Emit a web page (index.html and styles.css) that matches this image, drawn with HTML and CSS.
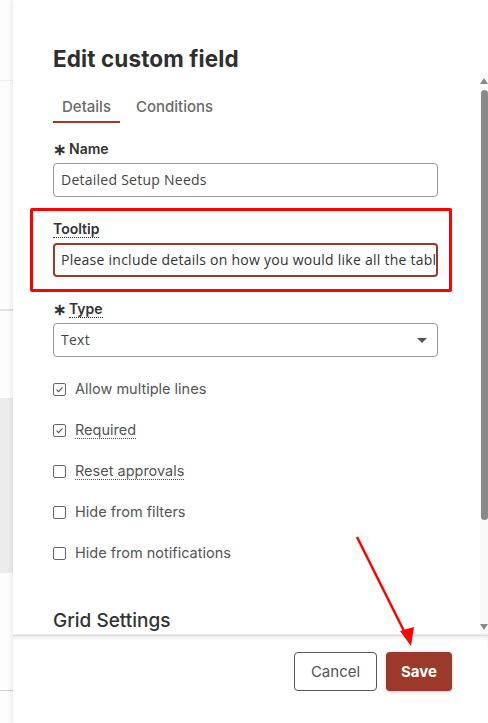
FILE: index.html
```html
<!DOCTYPE html>
<html>
<head>
<meta charset="utf-8">
<link rel="stylesheet" href="styles.css">
</head>
<body>
<div class="backdrop">
  <div class="bd-top"></div>
  <div class="bd-mid"></div>
  <div class="bd-gap"></div>
  <div class="bd-block"></div>
  <div class="bd-low"></div>
</div>
<div class="panel">
  <div class="header">
    <h1 class="title">Edit custom field</h1>
  </div>
  <div class="body">
    <div class="content">
      <div class="tabs">
        <div class="tab active">Details</div>
        <div class="tab">Conditions</div>
      </div>
      <div class="field">
        <div class="label"><span class="req">∗</span>Name</div>
        <div class="input">Detailed Setup Needs</div>
      </div>
      <div class="field">
        <div class="label"><span class="dotted">Tooltip</span></div>
        <div class="input focused">Please include details on how you would like all the tables set up for the event</div>
      </div>
      <div class="field">
        <div class="label"><span class="req">∗</span><span class="dotted">Type</span></div>
        <div class="input select"><span>Text</span><span class="caret"></span></div>
      </div>
      <div class="checks">
        <div class="check"><span class="box checked"><svg viewBox="0 0 13 13"><path d="M3 6.6 L5.4 9 L10 4" fill="none" stroke="#555" stroke-width="1.3"/></svg></span><span>Allow multiple lines</span></div>
        <div class="check"><span class="box checked"><svg viewBox="0 0 13 13"><path d="M3 6.6 L5.4 9 L10 4" fill="none" stroke="#555" stroke-width="1.3"/></svg></span><span class="dotted">Required</span></div>
        <div class="check"><span class="box"></span><span class="dotted">Reset approvals</span></div>
        <div class="check"><span class="box"></span><span>Hide from filters</span></div>
        <div class="check"><span class="box"></span><span>Hide from notifications</span></div>
      </div>
      <h2 class="section">Grid Settings</h2>
    </div>
    <div class="scrollbar">
      <div class="sb-up"></div>
      <div class="sb-thumb"></div>
      <div class="sb-space"></div>
      <div class="sb-down"></div>
    </div>
  </div>
  <div class="footer">
    <button class="btn cancel">Cancel</button>
    <button class="btn save">Save</button>
  </div>
</div>
<div class="annot-box"></div>
<svg class="annot-arrow" width="488" height="723" viewBox="0 0 488 723">
  <line x1="357" y1="537" x2="406" y2="635" stroke="#ff0000" stroke-width="2.5"/>
  <path d="M411 646 L400 631 L414 627 Z" fill="#ff0000"/>
</svg>
</body>
</html>
```
FILE: styles.css
```css
* { box-sizing: border-box; }
html, body { margin: 0; padding: 0; }
body {
  width: 488px;
  height: 723px;
  overflow: hidden;
  display: flex;
  background: #fff;
  font-family: "Inter", "Liberation Sans", sans-serif;
  color: #333;
  position: relative;
}
.backdrop {
  width: 13px;
  flex: none;
  display: flex;
  flex-direction: column;
  background: #fdfdfd;
}
.bd-top { height: 81px; border-bottom: 1px solid #ececec; }
.bd-mid { height: 230px; border-bottom: 2px solid #e2e2e2; }
.bd-gap { height: 87px; }
.bd-block { height: 175px; background: #ececec; }
.bd-low { height: 118px; border-bottom: 1px solid #cfcfcf; }

.panel {
  flex: 1;
  min-width: 0;
  display: flex;
  flex-direction: column;
  background: #fff;
  box-shadow: -2px 0 4px rgba(0,0,0,0.07);
  position: relative;
  z-index: 1;
}
.header { height: 73px; padding: 45px 0 0 40px; flex: none; }
.title {
  margin: 0;
  font-size: 22.5px;
  line-height: 28px;
  font-weight: 700;
  color: #2f2f2f;
  letter-spacing: 0.1px;
}
.body {
  height: 562px;
  flex: none;
  display: flex;
  overflow: hidden;
  min-width: 0;
}
.content {
  flex: 1;
  min-width: 0;
  padding: 20px 42px 0 40px;
}
.tabs { display: flex; gap: 16px; margin-bottom: 16px; }
.tab {
  font-size: 15px;
  line-height: 22px;
  padding: 3px 9px 3px;
  color: #6a6a6a;
  font-weight: 500;
  border-bottom: 2px solid transparent;
}
.tab + .tab { padding-left: 0; }
.tab.active { border-bottom-color: #9b3a2a; }
.field { margin-bottom: 22px; }
.label {
  font-size: 14px;
  height: 20px;
  line-height: 20px;
  font-weight: 600;
  color: #333;
  margin-bottom: 4px;
  display: flex;
  align-items: center;
}
.req { font-size: 16px; font-weight: 700; margin-right: 3px; line-height: 20px; }
.dotted { border-bottom: 1px dotted #333; line-height: 17px; }
.input {
  height: 34px;
  border: 1px solid #9a9a9a;
  border-radius: 4px;
  padding: 0 7px;
  font-family: "Open Sans", "Liberation Sans", sans-serif;
  font-size: 14px;
  letter-spacing: 0.25px;
  line-height: 32px;
  color: #444;
  white-space: nowrap;
  overflow: hidden;
}
.input.focused { border: 2px solid #9b3a2a; height: 34px; padding: 0 6px; line-height: 30px; color: #333; }
.select { display: flex; justify-content: space-between; align-items: center; padding-right: 10px; }
.caret {
  width: 0; height: 0;
  border-left: 5px solid transparent;
  border-right: 5px solid transparent;
  border-top: 5px solid #555;
}
.checks { display: flex; flex-direction: column; gap: 21px; margin-top: 0; }
.check {
  display: flex;
  align-items: center;
  gap: 9px;
  height: 20px;
  font-size: 14.5px;
  line-height: 20px;
  color: #555;
}
.check .dotted { border-bottom-color: #555; }
.box {
  width: 13px; height: 13px;
  border: 1px solid #666;
  border-radius: 2px;
  flex: none;
  display: flex;
}
.box svg { width: 11px; height: 11px; }
.section {
  margin: 46px 0 0;
  font-size: 19px;
  line-height: 24px;
  font-weight: 500;
  color: #333;
}
.scrollbar {
  width: 8px;
  flex: none;
  background: #f9f9f9;
  display: flex;
  flex-direction: column;
  align-items: center;
}
.sb-up {
  margin-top: 5px;
  width: 0; height: 0;
  border-left: 4px solid transparent;
  border-right: 4px solid transparent;
  border-bottom: 6px solid #8a8a8a;
}
.sb-thumb {
  margin-top: 6px;
  width: 7px;
  height: 430px;
  background: #8a8a8a;
  border-radius: 4px;
  align-self: flex-end;
}
.sb-space { flex: 1; }
.sb-down {
  margin-bottom: 5px;
  width: 0; height: 0;
  border-left: 4px solid transparent;
  border-right: 4px solid transparent;
  border-top: 6px solid #8a8a8a;
}
.footer {
  flex: 1;
  border-top: 1px solid #ddd;
  box-shadow: 0 -1px 0 #eee, inset 0 3px 4px -2px rgba(0,0,0,0.12);
  display: flex;
  justify-content: flex-end;
  align-items: flex-start;
  gap: 9px;
  padding: 16px 36px 0 0;
}
.btn {
  height: 39px;
  border-radius: 4px;
  font-family: "Inter", "Liberation Sans", sans-serif;
  font-size: 15px;
  cursor: pointer;
}
.cancel {
  width: 83px;
  background: #fff;
  border: 1px solid #555;
  color: #555;
}
.save {
  width: 66px;
  background: #9b3a2a;
  border: none;
  color: #fff;
  font-weight: 700;
  box-shadow: 0 1px 3px rgba(0,0,0,0.25);
}
.annot-box {
  position: absolute;
  left: 30px;
  top: 208px;
  width: 422px;
  height: 84px;
  border: 3px solid #ff0000;
  border-radius: 2px;
  z-index: 5;
}
.annot-arrow {
  position: absolute;
  left: 0;
  top: 0;
  z-index: 6;
  pointer-events: none;
}
```
